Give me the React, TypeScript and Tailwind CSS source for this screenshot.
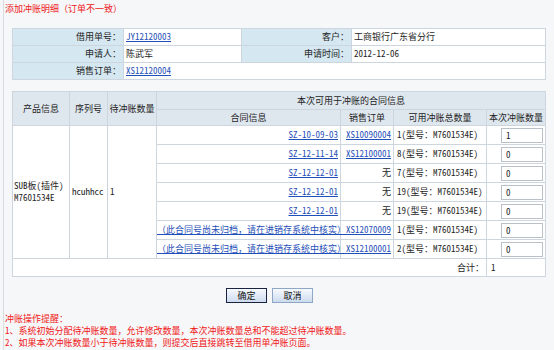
import React from "react";

const FONT = '"Noto Sans Mono CJK SC", "Noto Sans CJK SC", sans-serif';

const rows = [
  { c: "SZ-10-09-03", o: "XS10090004", n: "1", v: "1" },
  { c: "SZ-12-11-14", o: "XS12100001", n: "8", v: "0" },
  { c: "SZ-12-12-01", o: null, n: "7", v: "0" },
  { c: "SZ-12-12-01", o: null, n: "19", v: "0" },
  { c: "SZ-12-12-01", o: null, n: "19", v: "0" },
  { c: "（此合同号尚未归档，请在进销存系统中核实）", o: "XS12070009", n: "1", v: "0" },
  { c: "（此合同号尚未归档，请在进销存系统中核实）", o: "XS12100001", n: "2", v: "0" },
];

const link = "text-[#1f4fb8] underline";
const bd = "border border-[#cdd6de]";

export default function App() {
  return (
    <div
      className="w-[554px] h-[350px] bg-[#f6f7f9] pl-[3px] text-[9px] leading-[10px] text-[#1e1e1e]"
      style={{ fontFamily: FONT }}
    >
      <div className="h-full border-l border-[#dadcdf] pl-[1px]">
        <div className="pt-[4px] h-[28px] text-[#ee2020]">添加冲账明细（订单不一致）</div>

        <table className="ml-[7px] w-[533px] border-collapse table-fixed">
          <colgroup>
            <col className="w-[111px]" />
            <col className="w-[118px]" />
            <col className="w-[110px]" />
            <col className="w-[194px]" />
          </colgroup>
          <tbody>
            <tr className="h-[17px]">
              <td className={`${bd} bg-[#d5e7f0] text-right pr-[2px] font-medium`}>借用单号：</td>
              <td className={`${bd} bg-white pl-[2px]`}>
                <span className={link}>JY12120003</span>
              </td>
              <td className={`${bd} bg-[#d5e7f0] text-right pr-[2px] font-medium`}>客户：</td>
              <td className={`${bd} bg-white pl-[2px]`}>工商银行广东省分行</td>
            </tr>
            <tr className="h-[17px]">
              <td className={`${bd} bg-[#d5e7f0] text-right pr-[2px] font-medium`}>申请人：</td>
              <td className={`${bd} bg-white pl-[2px]`}>陈武军</td>
              <td className={`${bd} bg-[#d5e7f0] text-right pr-[2px] font-medium`}>申请时间：</td>
              <td className={`${bd} bg-white pl-[2px]`}>2012-12-06</td>
            </tr>
            <tr className="h-[17px]">
              <td className={`${bd} bg-[#d5e7f0] text-right pr-[2px] font-medium`}>销售订单：</td>
              <td className={`${bd} bg-white pl-[2px]`} colSpan={3}>
                <span className={link}>XS12120004</span>
              </td>
            </tr>
          </tbody>
        </table>

        <table className="ml-[7px] mt-[11px] w-[533px] border-collapse table-fixed">
          <colgroup>
            <col className="w-[57px]" />
            <col className="w-[38px]" />
            <col className="w-[49px]" />
            <col className="w-[184px]" />
            <col className="w-[53px]" />
            <col className="w-[93px]" />
            <col className="w-[59px]" />
          </colgroup>
          <thead>
            <tr className="h-[18px] bg-[#dfe7ee]">
              <th rowSpan={2} className={`${bd} font-normal text-center`}>产品信息</th>
              <th rowSpan={2} className={`${bd} font-normal text-center`}>序列号</th>
              <th rowSpan={2} className={`${bd} font-normal text-center whitespace-nowrap`}>待冲账数量</th>
              <th colSpan={4} className={`${bd} font-normal text-center`}>本次可用于冲账的合同信息</th>
            </tr>
            <tr className="h-[16px] bg-[#dfe7ee]">
              <th className={`${bd} font-normal text-center`}>合同信息</th>
              <th className={`${bd} font-normal text-center`}>销售订单</th>
              <th className={`${bd} font-normal text-center`}>可用冲账总数量</th>
              <th className={`${bd} font-normal text-center whitespace-nowrap`}>本次冲账数量</th>
            </tr>
          </thead>
          <tbody className="bg-white">
            {rows.map((r, i) => (
              <tr key={i} className="h-[19px]">
                {i === 0 && (
                  <>
                    <td rowSpan={7} className={`${bd} pl-[1px] align-middle leading-[12px]`}>
                      <div className="whitespace-nowrap">SUB板(插件)</div>
                      <div>M7601534E</div>
                    </td>
                    <td rowSpan={7} className={`${bd} pl-[2px] align-middle`}>hcuhhcc</td>
                    <td rowSpan={7} className={`${bd} pl-[2px] align-middle`}>1</td>
                  </>
                )}
                <td className={`${bd} text-right pr-[2px] whitespace-nowrap`}>
                  <span className={link}>{r.c}</span>
                </td>
                <td className={`${bd} text-right pr-[2px] whitespace-nowrap`}>
                  {r.o ? <span className={link}>{r.o}</span> : "无"}
                </td>
                <td className={`${bd} pl-[3px] whitespace-nowrap`}>{r.n}(型号：M7601534E)</td>
                <td className={`${bd}`}>
                  <div className="flex justify-end pr-[2px]">
                    <input
                      readOnly
                      value={r.v}
                      className="w-[42px] h-[15px] border border-[#b9c0c7] bg-white px-[4px] text-[9px] leading-[13px] outline-none"
                      style={{ fontFamily: FONT }}
                    />
                  </div>
                </td>
              </tr>
            ))}
            <tr className="h-[18px]">
              <td colSpan={6} className={`${bd} text-right pr-[2px]`}>合计：</td>
              <td className={`${bd} pl-[4px]`}>1</td>
            </tr>
          </tbody>
        </table>

        <div className="mt-[11px] flex justify-center gap-[5px] pr-[20px]">
          <button
            className="w-[41px] h-[15px] border border-[#1a2440] bg-gradient-to-b from-[#f7faff] to-[#cddbee] text-[9px] leading-[12px] text-[#111]"
            style={{ fontFamily: FONT }}
          >
            确定
          </button>
          <button
            className="w-[41px] h-[15px] border border-[#8ea7c6] bg-gradient-to-b from-[#f7faff] to-[#cddbee] text-[9px] leading-[12px] text-[#111]"
            style={{ fontFamily: FONT }}
          >
            取消
          </button>
        </div>

        <div className="mt-[10px] text-[#f01818] leading-[12px]">
          <div>冲账操作提醒：</div>
          <div>1、系统初始分配待冲账数量，允许修改数量，本次冲账数量总和不能超过待冲账数量。</div>
          <div>2、如果本次冲账数量小于待冲账数量，则提交后直接跳转至借用单冲账页面。</div>
        </div>
      </div>
    </div>
  );
}
